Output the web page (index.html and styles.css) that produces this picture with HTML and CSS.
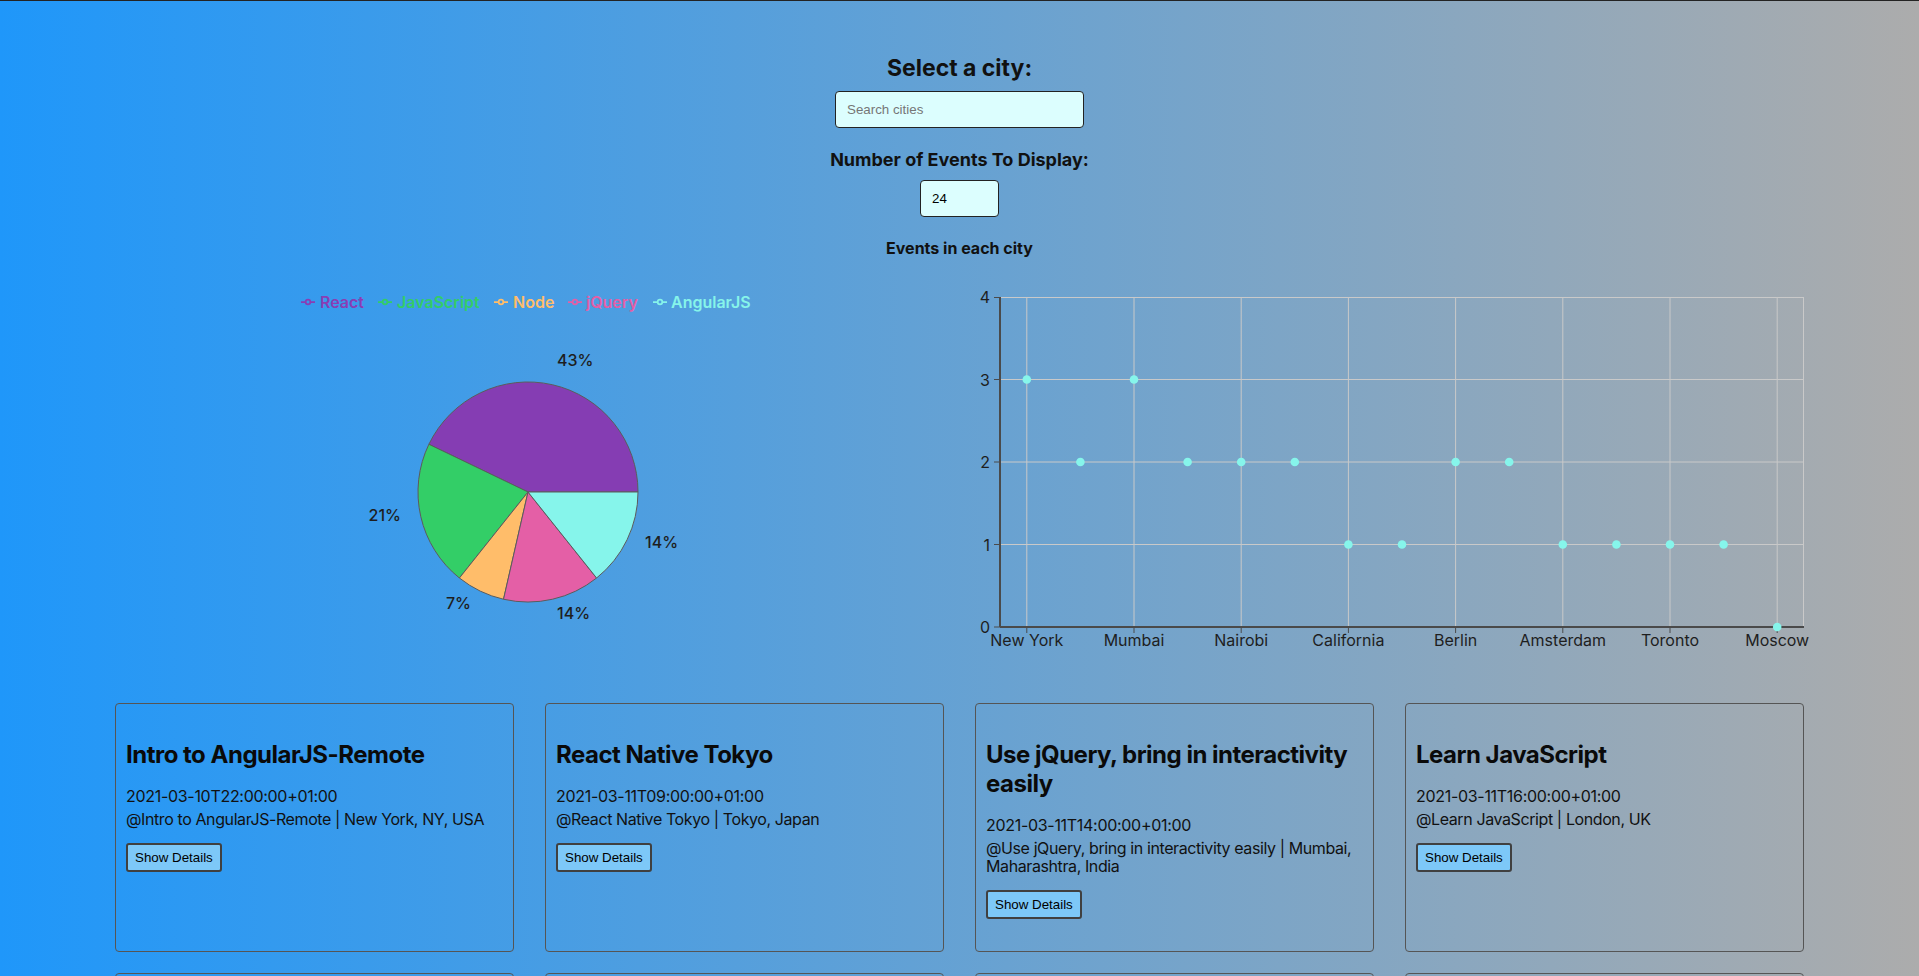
FILE: index.html
```html
<!DOCTYPE html>
<html lang="en">
<head>
<meta charset="utf-8">
<title>Meet App</title>
<link rel="stylesheet" href="styles.css">
</head>
<body>
<div class="app">
  <h1 class="city-label">Select a city:</h1>
  <input class="city-search" type="text" placeholder="Search cities">
  <h3 class="num-label">Number of Events To Display:</h3>
  <input class="num-input" type="text" value="24">
  <h4 class="chart-title">Events in each city</h4>

  <div class="charts">
    <svg class="pie-chart" width="845" height="400" viewBox="0 0 845 400">
      <g class="legend">
        <g stroke="#8a3db4" fill="none" stroke-width="1.75"><path d="M186 32h4.7M195.3 32h4.7"/><circle cx="193" cy="32" r="2.3"/></g>
        <text x="205" y="32" fill="#8a3db4">React</text>
        <g stroke="#33cd67" fill="none" stroke-width="1.75"><path d="M263 32h4.7M272.3 32h4.7"/><circle cx="270" cy="32" r="2.3"/></g>
        <text x="282" y="32" fill="#33cd67">JavaScript</text>
        <g stroke="#ffbd6a" fill="none" stroke-width="1.75"><path d="M379 32h4.7M388.3 32h4.7"/><circle cx="386" cy="32" r="2.3"/></g>
        <text x="398" y="32" fill="#ffbd6a">Node</text>
        <g stroke="#e45fa6" fill="none" stroke-width="1.75"><path d="M453 32h4.7M462.3 32h4.7"/><circle cx="460" cy="32" r="2.3"/></g>
        <text x="471" y="32" fill="#e45fa6">jQuery</text>
        <g stroke="#86f4ea" fill="none" stroke-width="1.75"><path d="M538 32h4.7M547.3 32h4.7"/><circle cx="545" cy="32" r="2.3"/></g>
        <text x="556" y="32" fill="#86f4ea">AngularJS</text>
      </g>
      <g class="slices" stroke="#5c5c5c" stroke-width="1">
        <path fill="#853db3" d="M413 222 L523 222 A110 110 0 0 0 313.89 174.27 Z"/>
        <path fill="#33ce67" d="M413 222 L313.89 174.27 A110 110 0 0 0 344.42 308 Z"/>
        <path fill="#ffbd6a" d="M413 222 L344.42 308 A110 110 0 0 0 388.52 329.24 Z"/>
        <path fill="#e45fa6" d="M413 222 L388.52 329.24 A110 110 0 0 0 481.58 308 Z"/>
        <path fill="#86f5eb" d="M413 222 L481.58 308 A110 110 0 0 0 523 222 Z"/>
      </g>
      <g class="pie-labels">
        <text x="442" y="90" text-anchor="start">43%</text>
        <text x="286" y="245" text-anchor="end">21%</text>
        <text x="356" y="333" text-anchor="end">7%</text>
        <text x="442" y="343" text-anchor="start">14%</text>
        <text x="530" y="272" text-anchor="start">14%</text>
      </g>
    </svg>

    <svg class="scatter-chart" width="844" height="400" viewBox="0 0 844 400">
      <g class="grid" stroke="#c9c9c9" stroke-width="1">
        <path d="M40 27.5H844M40 109.5H844M40 192H844M40 274.5H844"/>
        <path d="M66.8 27V357M174 27V357M281.2 27V357M388.4 27V357M495.6 27V357M602.8 27V357M710 27V357M817.2 27V357M843.5 27V357"/>
      </g>
      <g class="axes" stroke="#4a4a4a">
        <path d="M40 27V357" stroke-width="2"/>
        <path d="M40 357H844" stroke-width="2"/>
        <path d="M34 27.5H40M34 109.5H40M34 192H40M34 274.5H40M34 357H40" stroke-width="1"/>
        <path d="M66.8 357V363M174 357V363M281.2 357V363M388.4 357V363M495.6 357V363M602.8 357V363M710 357V363M817.2 357V363" stroke-width="1"/>
      </g>
      <g class="y-ticks">
        <text x="30" y="27">4</text>
        <text x="30" y="109.5">3</text>
        <text x="30" y="192">2</text>
        <text x="30" y="274.5">1</text>
        <text x="30" y="357">0</text>
      </g>
      <g class="x-ticks">
        <text x="66.8" y="370">New York</text>
        <text x="174" y="370">Mumbai</text>
        <text x="281.2" y="370">Nairobi</text>
        <text x="388.4" y="370">California</text>
        <text x="495.6" y="370">Berlin</text>
        <text x="602.8" y="370">Amsterdam</text>
        <text x="710" y="370">Toronto</text>
        <text x="817.2" y="370">Moscow</text>
      </g>
      <g class="points" fill="#86f5eb">
        <circle cx="66.8" cy="109.5" r="4.3"/>
        <circle cx="120.4" cy="192" r="4.3"/>
        <circle cx="174" cy="109.5" r="4.3"/>
        <circle cx="227.6" cy="192" r="4.3"/>
        <circle cx="281.2" cy="192" r="4.3"/>
        <circle cx="334.8" cy="192" r="4.3"/>
        <circle cx="388.4" cy="274.5" r="4.3"/>
        <circle cx="442" cy="274.5" r="4.3"/>
        <circle cx="495.6" cy="192" r="4.3"/>
        <circle cx="549.2" cy="192" r="4.3"/>
        <circle cx="602.8" cy="274.5" r="4.3"/>
        <circle cx="656.4" cy="274.5" r="4.3"/>
        <circle cx="710" cy="274.5" r="4.3"/>
        <circle cx="763.6" cy="274.5" r="4.3"/>
        <circle cx="817.2" cy="357" r="4.3"/>
      </g>
    </svg>
  </div>

  <ul class="events">
    <li class="event">
      <h2 class="event-title">Intro to AngularJS-Remote</h2>
      <p class="event-date">2021-03-10T22:00:00+01:00</p>
      <p class="event-loc">@Intro to AngularJS-Remote | New York, NY, USA</p>
      <button class="details-btn">Show Details</button>
    </li>
    <li class="event">
      <h2 class="event-title">React Native Tokyo</h2>
      <p class="event-date">2021-03-11T09:00:00+01:00</p>
      <p class="event-loc">@React Native Tokyo | Tokyo, Japan</p>
      <button class="details-btn">Show Details</button>
    </li>
    <li class="event">
      <h2 class="event-title">Use jQuery, bring in interactivity easily</h2>
      <p class="event-date">2021-03-11T14:00:00+01:00</p>
      <p class="event-loc">@Use jQuery, bring in interactivity easily | Mumbai, Maharashtra, India</p>
      <button class="details-btn">Show Details</button>
    </li>
    <li class="event">
      <h2 class="event-title">Learn JavaScript</h2>
      <p class="event-date">2021-03-11T16:00:00+01:00</p>
      <p class="event-loc">@Learn JavaScript | London, UK</p>
      <button class="details-btn">Show Details</button>
    </li>
    <li class="event">
      <h2 class="event-title">React is Fun</h2>
      <p class="event-date">2021-03-12T10:00:00+01:00</p>
      <p class="event-loc">@React is Fun | Berlin, Germany</p>
      <button class="details-btn">Show Details</button>
    </li>
    <li class="event">
      <h2 class="event-title">Node Fundamentals</h2>
      <p class="event-date">2021-03-12T14:00:00+01:00</p>
      <p class="event-loc">@Node Fundamentals | Nairobi, Kenya</p>
      <button class="details-btn">Show Details</button>
    </li>
    <li class="event">
      <h2 class="event-title">AngularJS Overview</h2>
      <p class="event-date">2021-03-13T18:00:00+01:00</p>
      <p class="event-loc">@AngularJS Overview | Toronto, ON, Canada</p>
      <button class="details-btn">Show Details</button>
    </li>
    <li class="event">
      <h2 class="event-title">React Meetup</h2>
      <p class="event-date">2021-03-14T19:00:00+01:00</p>
      <p class="event-loc">@React Meetup | Amsterdam, Netherlands</p>
      <button class="details-btn">Show Details</button>
    </li>
  </ul>
</div>
</body>
</html>
```
FILE: styles.css
```css
html {
  scrollbar-width: none;
}
html::-webkit-scrollbar {
  display: none;
}
body {
  margin: 0;
  min-height: 100vh;
  border-top: 1px solid #232323;
  background: linear-gradient(to right, #1f97fa, #acacac);
  font-family: Inter, "Noto Sans", sans-serif;
  color: #111;
}
.app {
  text-align: center;
  padding-bottom: 40px;
}
.city-label {
  margin: 53px 0 0;
  font-size: 23px;
  line-height: 28px;
  font-weight: 700;
}
.city-search,
.num-input {
  display: block;
  box-sizing: border-box;
  height: 37px;
  margin: 9px auto 0;
  padding: 0 11px;
  border: 1px solid #222;
  border-radius: 4px;
  background: #dcfefe;
  color: #000;
  font: 13.33px "Liberation Sans", Arial, sans-serif;
}
.city-search {
  width: 249px;
}
.city-search::placeholder {
  color: #767676;
}
.num-input {
  width: 79px;
}
.num-label {
  margin: 21px 0 0;
  font-size: 18px;
  line-height: 22px;
  font-weight: 700;
}
.chart-title {
  margin: 21px 0 0;
  font-size: 16px;
  line-height: 20px;
  font-weight: 700;
}
.charts {
  display: flex;
  width: 1689px;
  margin: 12px auto 0;
}
.charts svg {
  display: block;
  overflow: visible;
}
.legend text {
  font-family: Inter, sans-serif;
  font-size: 16px;
  font-weight: 600;
  dominant-baseline: central;
}
.pie-labels text {
  font-family: Inter, sans-serif;
  font-size: 16px;
  font-weight: 500;
  fill: #1e1e1e;
  dominant-baseline: central;
}
.y-ticks text {
  font-family: Inter, sans-serif;
  font-size: 16px;
  fill: #1e1e1e;
  text-anchor: end;
  dominant-baseline: central;
}
.x-ticks text {
  font-family: Inter, sans-serif;
  font-size: 16px;
  fill: #1e1e1e;
  text-anchor: middle;
  dominant-baseline: central;
}
.events {
  list-style: none;
  display: grid;
  grid-template-columns: repeat(4, 399px);
  column-gap: 31px;
  row-gap: 21px;
  width: 1689px;
  margin: 33px auto 0;
  padding: 0;
  text-align: left;
}
.event {
  box-sizing: border-box;
  height: 249px;
  padding: 36px 10px 0;
  border: 1px solid #555;
  border-radius: 4px;
}
.event-title {
  margin: 0 0 18px;
  font-size: 24px;
  line-height: 29px;
  font-weight: 700;
  letter-spacing: -0.5px;
  color: #0a0a0a;
}
.event-date,
.event-loc {
  margin: 0 0 5px;
  font-size: 16px;
  line-height: 18px;
  letter-spacing: -0.4px;
  color: #111;
}
.event-date {
  letter-spacing: -0.3px;
}
.event-loc {
  margin-bottom: 15px;
}
.details-btn {
  height: 29px;
  padding: 0 7px;
  border: 2px solid #404040;
  border-radius: 3px;
  background: #7dc8f8;
  color: #000;
  font: 13.33px "Liberation Sans", Arial, sans-serif;
}
```
